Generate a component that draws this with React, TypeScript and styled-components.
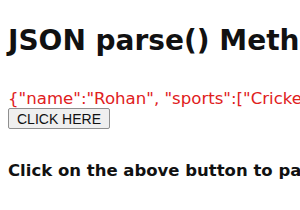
import React from 'react';
import styled, { createGlobalStyle } from 'styled-components';

const GlobalStyle = createGlobalStyle`
  html, body {
    margin: 0;
    padding: 0;
    background: #fff;
    overflow: hidden;
  }
  body {
    font-family: 'DejaVu Sans', 'Liberation Sans', sans-serif;
  }
`;

const Page = styled.div`
  width: 300px;
  height: 210px;
  overflow: hidden;
  padding: 25px 8px 0;
  box-sizing: border-box;
  white-space: nowrap;
`;

const Title = styled.h1`
  margin: 0;
  font-size: 28px;
  font-weight: 700;
  color: #111;
  line-height: 32px;
`;

const JsonText = styled.p`
  margin: 32px 0 0;
  font-size: 16.6px;
  color: #e0201c;
  line-height: 19px;
`;

const Button = styled.button`
  display: block;
  margin: 0;
  padding: 1px 8px;
  font-family: 'Liberation Sans', Arial, sans-serif;
  font-size: 14px;
  color: #111;
  background: #efefef;
  border: 1px solid #8f8f8f;
  border-radius: 2px;
  height: 21px;
`;

const Hint = styled.p`
  margin: 32px 0 0;
  font-size: 16.5px;
  font-weight: 700;
  color: #111;
  line-height: 20px;
`;

export default function App() {
  return (
    <Page>
      <GlobalStyle />
      <Title>JSON parse() Method</Title>
      <JsonText>{'{"name":"Rohan", "sports":["Cricket", "Football"]}'}</JsonText>
      <Button>CLICK HERE</Button>
      <Hint>Click on the above button to parse JSON string</Hint>
    </Page>
  );
}
